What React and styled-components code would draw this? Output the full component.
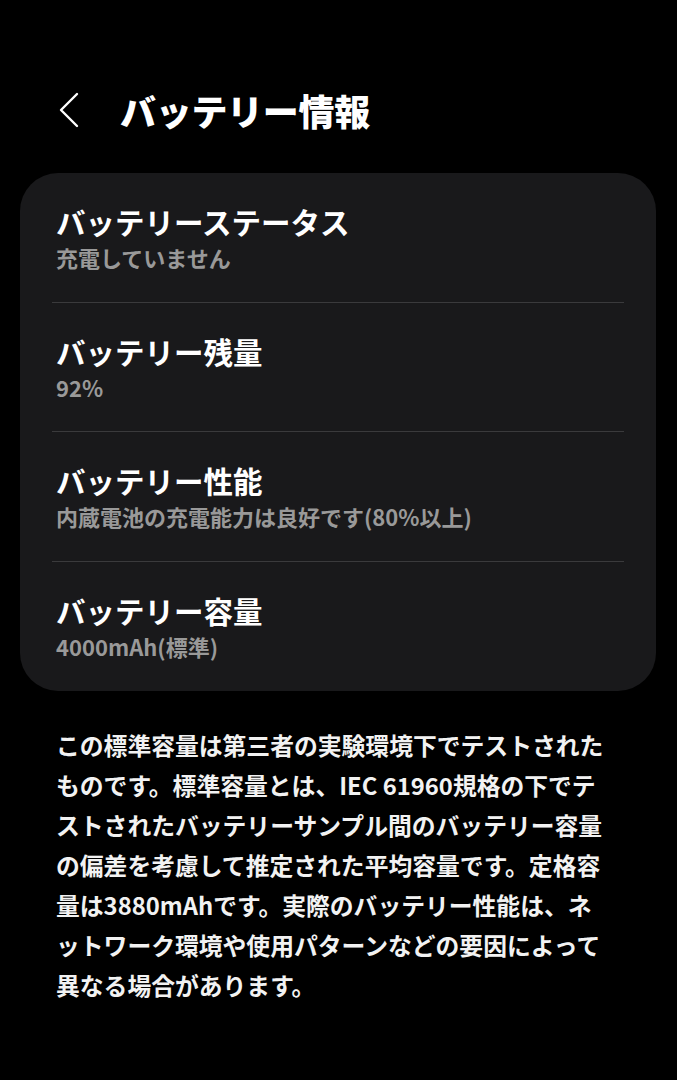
import React from "react";
import styled, { createGlobalStyle } from "styled-components";

const GlobalStyle = createGlobalStyle`
  html, body {
    margin: 0;
    padding: 0;
    background: #000;
  }
  body {
    font-family: "Noto Sans CJK JP", "Noto Sans", sans-serif;
    color: #fff;
  }
`;

const items = [
  { title: "バッテリーステータス", value: "充電していません" },
  { title: "バッテリー残量", value: "92%" },
  { title: "バッテリー性能", value: "内蔵電池の充電能力は良好です(80%以上)" },
  { title: "バッテリー容量", value: "4000mAh(標準)" },
];

// 参照画像と同じ位置で改行する
const noteLines = [
  "この標準容量は第三者の実験環境下でテストされた",
  "ものです。標準容量とは、IEC 61960規格の下でテ",
  "ストされたバッテリーサンプル間のバッテリー容量",
  "の偏差を考慮して推定された平均容量です。定格容",
  "量は3880mAhです。実際のバッテリー性能は、ネ",
  "ットワーク環境や使用パターンなどの要因によって",
  "異なる場合があります。",
];

const App = () => {
  return (
    <>
      <GlobalStyle />
      <Page>
        <Header>
          <BackButton aria-label="戻る">
            <svg width="22" height="36" viewBox="0 0 22 36" fill="none">
              <path
                d="M19 2 L3 18 L19 34"
                stroke="#fff"
                strokeWidth="2.4"
                strokeLinecap="round"
                strokeLinejoin="round"
              />
            </svg>
          </BackButton>
          <Title>バッテリー情報</Title>
        </Header>

        <Card>
          {items.map((item, i) => (
            <Row key={item.title} $last={i === items.length - 1}>
              <RowTitle>{item.title}</RowTitle>
              <RowValue>{item.value}</RowValue>
            </Row>
          ))}
        </Card>

        <Note>
          {noteLines.map((line) => (
            <NoteLine key={line}>{line}</NoteLine>
          ))}
        </Note>
      </Page>
    </>
  );
};

export default App;

const Page = styled.div`
  width: 677px;
  min-height: 1080px;
  box-sizing: border-box;
  padding: 80px 21px 40px 20px;
  background: #000;
`;

const Header = styled.div`
  height: 60px;
  display: flex;
  align-items: center;
  margin-bottom: 33px;
  padding-left: 38px;
`;

const BackButton = styled.button`
  width: 24px;
  height: 40px;
  padding: 0;
  border: none;
  background: none;
  display: flex;
  align-items: center;
  cursor: pointer;
`;

const Title = styled.h1`
  margin: 0 0 0 38px;
  font-size: 36px;
  font-weight: 900;
  letter-spacing: -0.3px;
  line-height: 1;
  color: #fff;
`;

const Card = styled.div`
  background: #19191b;
  border-radius: 38px;
  padding: 0 32px;
`;

const Row = styled.div`
  height: 129.5px;
  box-sizing: border-box;
  padding: 30px 0 0 4px;
  border-bottom: ${(p) => (p.$last ? "none" : "1.5px solid #3a3a3c")};
  display: flex;
  flex-direction: column;
`;

const RowTitle = styled.div`
  font-size: 29.5px;
  line-height: 36px;
  font-weight: 700;
  color: #fff;
`;

const RowValue = styled.div`
  margin-top: 4px;
  font-size: 22px;
  line-height: 28px;
  font-weight: 700;
  color: #999999;
`;

const Note = styled.div`
  margin: 34px 0 0 36px;
  font-size: 23.8px;
  line-height: 40px;
  font-weight: 700;
  color: #f2f2f2;
`;

const NoteLine = styled.div`
  white-space: nowrap;
`;
